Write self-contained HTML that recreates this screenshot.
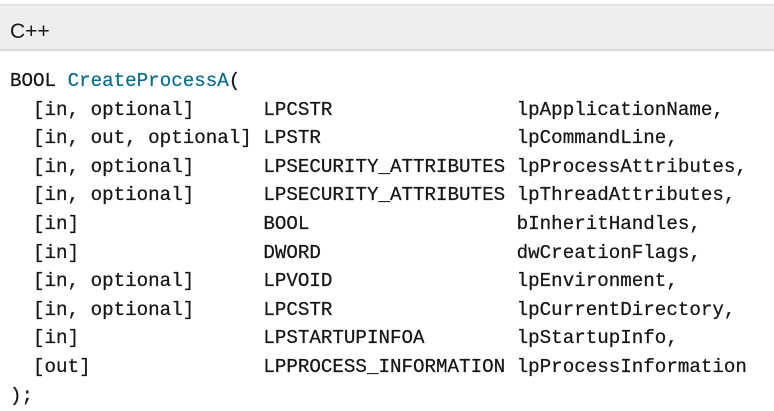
<!DOCTYPE html>
<html><head><style>
body{margin:0;width:774px;height:411px;background:#fff;overflow:hidden}
.hd{position:absolute;left:0;top:4px;width:774px;height:47px;background:#eeeeee;border-top:2px solid #e2e2e2;border-bottom:2px solid #dcdcdc;box-sizing:border-box}
.hd span{position:absolute;left:10px;top:14px;font:21px "Liberation Sans",sans-serif;color:#171717}
pre{position:absolute;left:10px;top:67px;margin:0;font:19.2px/28.6px "Liberation Mono",monospace;color:#171717;-webkit-text-stroke:0.25px #171717}
.f{color:#0e6e8a;-webkit-text-stroke:0.25px #0e6e8a}
</style></head><body>
<div class="hd"><span>C++</span></div>
<pre>BOOL <span class="f">CreateProcessA</span>(
  [in, optional]      LPCSTR                lpApplicationName,
  [in, out, optional] LPSTR                 lpCommandLine,
  [in, optional]      LPSECURITY_ATTRIBUTES lpProcessAttributes,
  [in, optional]      LPSECURITY_ATTRIBUTES lpThreadAttributes,
  [in]                BOOL                  bInheritHandles,
  [in]                DWORD                 dwCreationFlags,
  [in, optional]      LPVOID                lpEnvironment,
  [in, optional]      LPCSTR                lpCurrentDirectory,
  [in]                LPSTARTUPINFOA        lpStartupInfo,
  [out]               LPPROCESS_INFORMATION lpProcessInformation
);</pre>
</body></html>
